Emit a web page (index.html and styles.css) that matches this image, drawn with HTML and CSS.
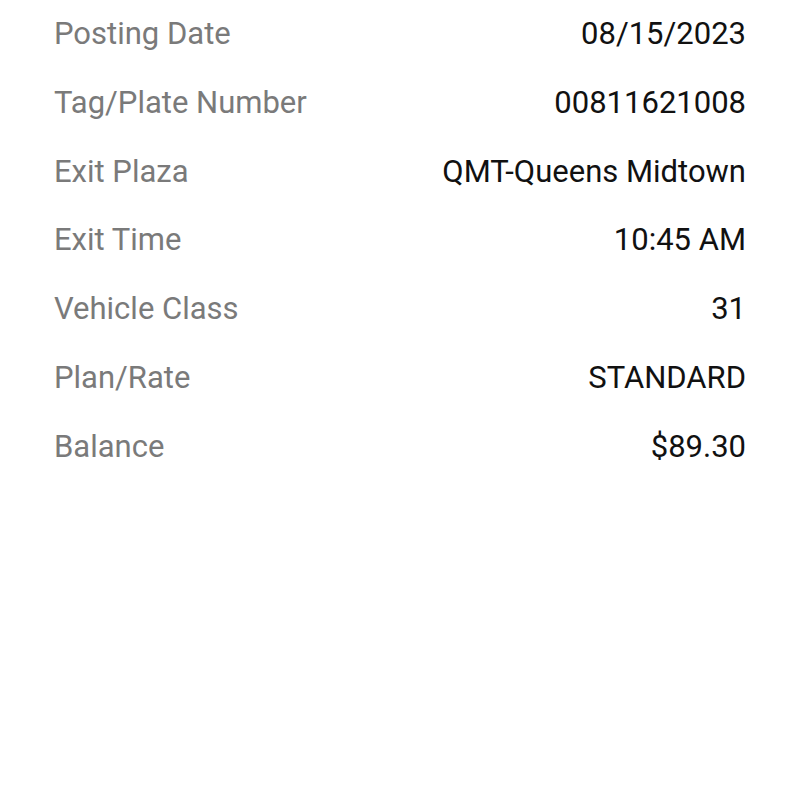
FILE: index.html
```html
<!DOCTYPE html>
<html>
<head>
<meta charset="utf-8">
<link rel="stylesheet" href="styles.css">
</head>
<body>
<div class="details">
  <div class="row"><span class="label">Posting Date</span><span class="value">08/15/2023</span></div>
  <div class="row"><span class="label">Tag/Plate Number</span><span class="value">00811621008</span></div>
  <div class="row"><span class="label">Exit Plaza</span><span class="value">QMT-Queens Midtown</span></div>
  <div class="row"><span class="label">Exit Time</span><span class="value">10:45 AM</span></div>
  <div class="row"><span class="label">Vehicle Class</span><span class="value">31</span></div>
  <div class="row"><span class="label">Plan/Rate</span><span class="value">STANDARD</span></div>
  <div class="row"><span class="label">Balance</span><span class="value">$89.30</span></div>
</div>
</body>
</html>
```

FILE: styles.css
```css
html, body {
  margin: 0;
  padding: 0;
  background: #ffffff;
}
body {
  font-family: Roboto, "Noto Sans", sans-serif;
  font-size: 31px;
}
.details {
  display: flex;
  flex-direction: column;
  padding: 0 54px;
  margin-top: -1px;
}
.row {
  display: flex;
  justify-content: space-between;
  align-items: center;
  height: 68.83px;
}
.label {
  color: #7a7a7a;
}
.value {
  color: #111111;
}
```
